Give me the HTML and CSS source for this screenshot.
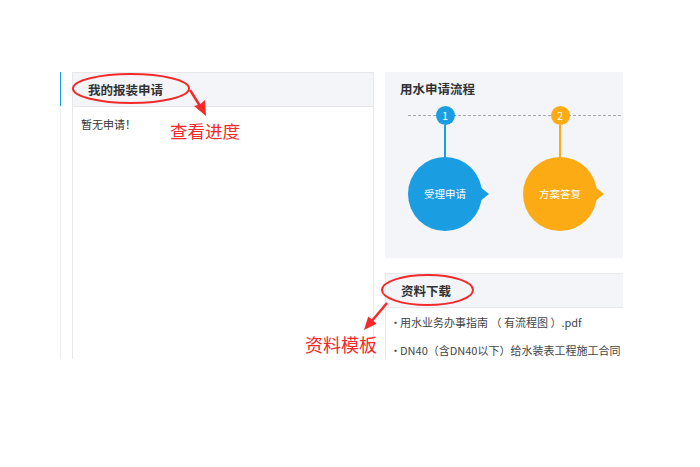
FILE: index.html
```html
<!doctype html>
<html lang="zh-CN">
<head>
    <meta charset="UTF-8">
    <title>用水报装</title>
    <link rel="stylesheet" href="styles.css">
</head>
<body>
<div class="page">
    <div class="layout">
        <div class="side"><div class="side-mark"></div></div>

        <div class="panel apply">
            <div class="panel-head">我的报装申请</div>
            <div class="apply-body">暂无申请！</div>
        </div>

        <div class="right">
            <div class="flow-box">
                <div class="flow-title">用水申请流程</div>
                <div class="flow">
                    <div class="step blue">
                        <span class="num">1</span>
                        <span class="stem"></span>
                        <span class="bubble">受理申请</span>
                    </div>
                    <div class="step orange">
                        <span class="num">2</span>
                        <span class="stem"></span>
                        <span class="bubble">方案答复</span>
                    </div>
                </div>
            </div>

            <div class="panel files">
                <div class="panel-head">资料下载</div>
                <ul class="file-list">
                    <li>用水业务办事指南 （ 有流程图 ）.pdf</li>
                    <li>DN40（含DN40以下）给水装表工程施工合同</li>
                </ul>
            </div>
        </div>
    </div>

    <!-- red notes drawn over the screenshot -->
    <svg class="notes" width="700" height="467" viewBox="0 0 700 467">
        <ellipse cx="131" cy="88.5" rx="58" ry="14.5" fill="none" stroke="#f42a2a" stroke-width="2"/>
        <path d="M190 90 L200 106" stroke="#f42a2a" stroke-width="2.5" fill="none"/>
        <polygon points="206,116 194,106 200,104.5 205,100" fill="#f42a2a"/>
        <ellipse cx="427.5" cy="290" rx="45.5" ry="15" fill="none" stroke="#f42a2a" stroke-width="2"/>
        <path d="M387 303 L371 322" stroke="#f42a2a" stroke-width="2.5" fill="none"/>
        <polygon points="364,330 368.2,316.5 372,319.5 376.6,323.7" fill="#f42a2a"/>
    </svg>
    <span class="note note-progress">查看进度</span>
    <span class="note note-files">资料模板</span>
</div>
</body>
</html>
```

FILE: styles.css
```css
body {
    margin: 0;
    background-color: #FFF;
    font-family: "Noto Sans CJK SC", "Noto Sans", sans-serif;
    color: #333;
}
.page {
    position: relative;
    width: 700px;
    height: 467px;
    padding: 72px 0 0 60px;
    box-sizing: border-box;
}
.layout {
    display: flex;
    height: 287px;
    overflow: hidden;
}
.side {
    width: 1px;
    background-color: #EEE;
}
.side-mark {
    height: 34px;
    background-color: #1B9DE2;
}
.panel {
    box-sizing: border-box;
    border: 1px solid #E8E8E8;
    border-bottom: none;
    background-color: #FFF;
}
.panel-head {
    height: 33px;
    line-height: 33px;
    padding-left: 15px;
    background-color: #F4F5F9;
    border-bottom: 1px solid #E6E6E6;
    font-size: 12.5px;
    font-weight: bold;
    color: #333;
}
.apply {
    width: 302px;
    margin-left: 11px;
}
.apply-body {
    padding: 9px 0 0 8px;
    font-size: 11px;
    line-height: 16px;
}
.right {
    width: 238px;
    margin-left: 11px;
    overflow: hidden;
    flex-shrink: 0;
}
.flow-box {
    height: 186px;
    background-color: #F4F5F9;
}
.flow-title {
    height: 34px;
    line-height: 34px;
    padding-left: 15px;
    font-size: 12.5px;
    font-weight: bold;
}
.flow {
    display: flex;
    gap: 41px;
    margin-left: 23px;
    background: repeating-linear-gradient(to right, #A8A8A8 0 3px, transparent 3px 5px) no-repeat 0 9px / 100% 1px;
}
.step {
    width: 74px;
    display: flex;
    flex-direction: column;
    align-items: center;
    flex-shrink: 0;
}
.num {
    width: 19px;
    height: 19px;
    border-radius: 50%;
    color: #FFF;
    font-size: 11px;
    line-height: 19px;
    text-align: center;
}
.stem {
    width: 2px;
    height: 32px;
}
.bubble {
    position: relative;
    width: 74px;
    height: 74px;
    border-radius: 50%;
    color: #FFF;
    font-size: 10.5px;
    line-height: 74px;
    text-align: center;
}
.bubble::after {
    content: "";
    position: absolute;
    right: -7px;
    top: 29px;
    border-left: 10px solid;
    border-top: 8px solid transparent;
    border-bottom: 8px solid transparent;
    border-left-color: inherit;
}
.blue .num, .blue .stem, .blue .bubble {
    background-color: #1B9DE2;
    border-color: #1B9DE2;
}
.orange .num, .orange .stem, .orange .bubble {
    background-color: #FDAB14;
    border-color: #FDAB14;
}
.files {
    width: 250px;
    margin-top: 15px;
    border-right: none;
}
.file-list {
    margin: 0;
    padding: 0 0 0 4px;
    list-style: none;
    font-size: 11px;
    line-height: 28px;
    color: #444;
    white-space: nowrap;
}
.file-list li::before {
    content: "·";
    display: inline-block;
    width: 10px;
}
.notes {
    position: absolute;
    top: 0;
    left: 0;
    pointer-events: none;
}
.note {
    position: absolute;
    color: #F42A2A;
    line-height: 1;
    white-space: nowrap;
}
.note-progress {
    left: 170px;
    top: 122px;
    font-size: 17.5px;
}
.note-files {
    left: 305px;
    top: 335px;
    font-size: 18px;
}
```
